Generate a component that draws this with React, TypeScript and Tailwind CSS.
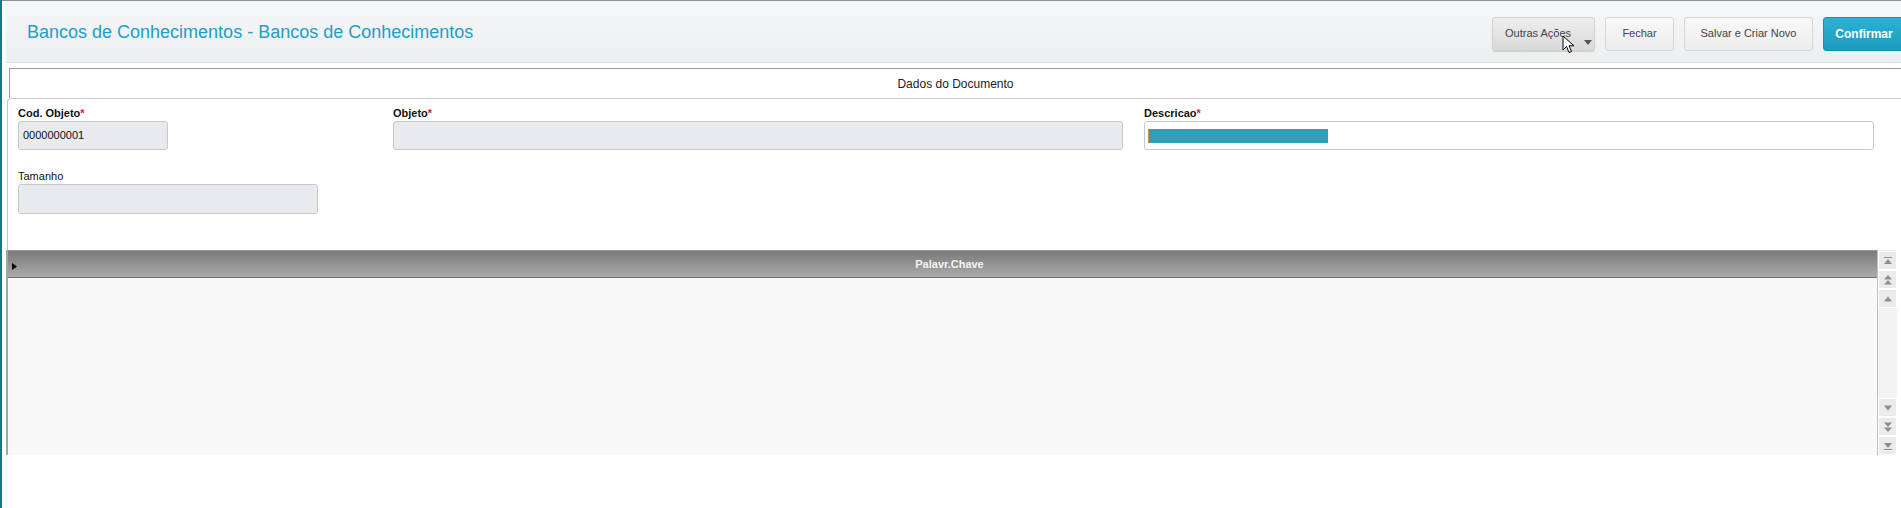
import React from 'react';

function Field({ label, required, width, value, white, bold = true }: { label: string; required?: boolean; width: string; value?: string; white?: boolean; bold?: boolean }) {
  return (
    <div>
      <div className={`text-[11px] leading-[13px] text-[#111] ${bold ? 'font-bold' : ''}`}>
        {label}
        {required && <span className="text-[#e0202a]">*</span>}
      </div>
      <div
        className={`mt-px h-[29px] rounded-[3px] border border-[#c6c8ca] flex items-center px-[4px] text-[11px] text-[#111] ${width} ${white ? 'bg-white' : 'bg-[#e8eaed]'}`}
      >
        {value}
      </div>
    </div>
  );
}

function ScrollBtn({ dir, kind }: { dir: 'up' | 'down'; kind: 'bar' | 'double' | 'single' }) {
  const up = dir === 'up';
  return (
    <div className="h-[19px] flex items-center justify-center bg-[#ebebeb] border border-white">
      <svg width="10" height="10" viewBox="0 0 10 10">
        <g fill="#8e8e8e" transform={up ? '' : 'rotate(180 5 5)'}>
          {kind === 'bar' && (
            <>
              <rect x="1" y="1" width="8" height="1" />
              <polygon points="5,3 9,8 1,8" />
            </>
          )}
          {kind === 'double' && (
            <>
              <polygon points="5,0 9,4.5 1,4.5" />
              <polygon points="5,5 9,9.5 1,9.5" />
            </>
          )}
          {kind === 'single' && <polygon points="5,2.5 9,7.5 1,7.5" />}
        </g>
      </svg>
    </div>
  );
}

export default function App() {
  return (
    <div className="h-[508px] w-[1901px] overflow-hidden bg-white border-l-2 border-[#0e7a8b] font-['Liberation_Sans',Arial,sans-serif]">
      <div className="border-t border-[#8f8f8f]">
        {/* Header */}
        <div className="ml-[4px] h-[62px] flex items-center bg-linear-to-b from-[#f6f7f8] to-[#eceef0] border-b border-[#dcdddf] pl-[21px]">
          <h1 className="text-[18px] text-[#1c9fc8] leading-none">
            Bancos de Conhecimentos - Bancos de Conhecimentos
          </h1>
          <div className="ml-auto mr-[-4px] flex items-center gap-[10px] pt-[4px]">
            <button className="relative w-[103px] h-[34px] rounded-[3px] border border-[#d0d0d0] bg-linear-to-b from-[#eeeeee] to-[#d9d9d9] shadow-[0_1px_1px_rgba(0,0,0,0.15)] text-left pl-[12px] text-[11px] text-[#444]">
              Outras Ações
              <svg className="absolute left-[91px] top-[22px]" width="8" height="5" viewBox="0 0 8 5">
                <polygon points="0,0 8,0 4,5" fill="#555" />
              </svg>
              <svg className="absolute left-[69px] top-[17px]" width="14" height="20" viewBox="0 0 14 20">
                <path d="M1 1 L1 15 L4.5 11.5 L7 17.5 L9.5 16.5 L7 10.8 L12 10.8 Z" fill="#fff" stroke="#000" strokeWidth="1" strokeLinejoin="round" />
              </svg>
            </button>
            <button className="w-[69px] h-[34px] rounded-[3px] border border-[#d6d6d6] bg-linear-to-b from-[#f8f8f8] to-[#ededed] text-[11px] text-[#444]">
              Fechar
            </button>
            <button className="w-[129px] h-[34px] rounded-[3px] border border-[#d6d6d6] bg-linear-to-b from-[#f8f8f8] to-[#ededed] text-[11px] text-[#444]">
              Salvar e Criar Novo
            </button>
            <button className="w-[82px] h-[34px] rounded-[3px] border border-[#1890b0] bg-linear-to-b from-[#2eb1d1] to-[#1a9bc1] text-[12px] font-bold text-white">
              Confirmar
            </button>
          </div>
        </div>

        {/* Dados do Documento */}
        <div className="ml-[7px] mt-[5px] h-[30px] border-t border-l border-[#9c9c9c] flex items-center justify-center text-[12px] text-[#222]">
          Dados do Documento
        </div>

        {/* Form panel */}
        <div className="ml-[5px] h-[152px] border-t border-l border-[#cacaca] rounded-tl-[4px] pt-[8px] pl-[10px]">
          <div className="flex">
            <div className="w-[375px]">
              <Field label="Cod. Objeto" required width="w-[150px]" value="0000000001" />
            </div>
            <div className="w-[751px]">
              <Field label="Objeto" required width="w-[730px]" />
            </div>
            <div className="w-[730px]">
              <div className="text-[11px] leading-[13px] font-bold text-[#111]">
                Descricao<span className="text-[#e0202a]">*</span>
              </div>
              <div className="mt-px h-[29px] w-[730px] rounded-[3px] border border-[#c6c8ca] bg-white flex items-center pl-[3px]">
                <div className="h-[14px] w-[180px] bg-[#339db7] border-l border-[#d08a40]" />
              </div>
            </div>
          </div>
          <div className="mt-[20px]">
            <div className="text-[11px] leading-[13px] text-[#111]">Tamanho</div>
            <div className="mt-px h-[30px] w-[300px] rounded-[3px] border border-[#c6c8ca] bg-[#e8eaed]" />
          </div>
        </div>

        {/* Grid */}
        <div className="ml-[4px] flex">
          <div className="w-[1871px] border-l-2 border-[#a6a6a6]">
            <div className="relative h-[28px] border-t border-b border-t-[#9a9a9a] border-b-[#6f6f6f] bg-linear-to-b from-[#7a7a7a] to-[#acacac] flex items-center justify-center pl-[14px] text-[11px] font-bold text-[#f4f4f4]">
              <svg className="absolute left-[4px] top-[12px]" width="5" height="7" viewBox="0 0 5 7">
                <polygon points="0,0 5,3.5 0,7" fill="#000" />
              </svg>
              Palavr.Chave
            </div>
            <div className="h-[177px] bg-[#f9f9f9]" />
          </div>
          <div className="w-[20px] h-[205px] border-l border-[#bfbfbf] bg-[#f3f3f3] flex flex-col pt-[1px]">
            <ScrollBtn dir="up" kind="bar" />
            <ScrollBtn dir="up" kind="double" />
            <ScrollBtn dir="up" kind="single" />
            <div className="flex-1" />
            <ScrollBtn dir="down" kind="single" />
            <ScrollBtn dir="down" kind="double" />
            <ScrollBtn dir="down" kind="bar" />
          </div>
        </div>
      </div>
    </div>
  );
}
